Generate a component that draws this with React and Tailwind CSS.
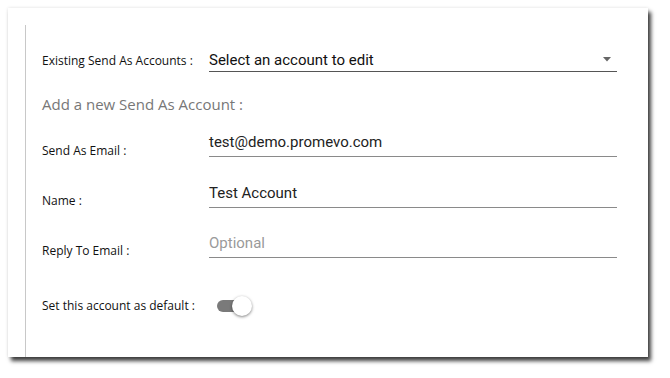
import React from 'react';

const labelFont = { fontFamily: '"Open Sans", "Liberation Sans", sans-serif' };

const Field = ({ label, value, placeholder, top, labelTop }) => (
  <div className={`flex ${top}`}>
    <div className={`w-[167px] shrink-0 text-[12px] leading-4 text-[#111] font-['Open_Sans',sans-serif] ${labelTop}`}>
      {label}
    </div>
    <div className="w-[408px] h-[26px] pt-[1px] border-b border-[#8a8a8a] font-['Roboto',sans-serif] text-[15px] leading-5">
      {value ? <span className="text-[#222]">{value}</span> : <span className="text-[#9a9a9a]">{placeholder}</span>}
    </div>
  </div>
);

const App = () => {
  return (
    <div className="w-[670px] h-[378px] bg-white p-[8px] pr-[22px] pb-[21px]">
      <div className="h-full bg-white shadow-[3px_4px_4px_rgba(0,0,0,0.75),0_0_3px_rgba(0,0,0,0.12)] pt-[17px] pl-[17px]">
        <div className="h-full border-l border-[#c8c8c8] pl-[16px] pt-[23px]" style={labelFont}>
          <div className="flex items-center">
            <div className="w-[167px] shrink-0 text-[12px] leading-4 text-[#111] font-['Open_Sans',sans-serif] mt-[1px]">
              Existing Send As Accounts :
            </div>
            <div className="w-[408px] h-[24px] border-b border-[#555] flex items-center justify-between font-['Roboto',sans-serif] text-[15px] leading-5 text-[#111]">
              <span>Select an account to edit</span>
              <svg width="8" height="5" viewBox="0 0 8 5" className="mr-[6px]">
                <path d="M0 0 L8 0 L4 4.5 Z" fill="#666" />
              </svg>
            </div>
          </div>
          <div className="mt-[22px] text-[15px] leading-5 text-[#777] font-['Open_Sans',sans-serif]">
            Add a new Send As Account :
          </div>
          <Field label="Send As Email :" value="test@demo.promevo.com" top="mt-[17px]" labelTop="mt-[12px]" />
          <Field label="Name :" value="Test Account" top="mt-[23px]" labelTop="mt-[11px]" />
          <Field label="Reply To Email :" placeholder="Optional" top="mt-[23px]" labelTop="mt-[11px]" />
          <div className="flex items-center mt-[37px]">
            <div className="w-[167px] shrink-0 text-[12px] leading-4 text-[#111] font-['Open_Sans',sans-serif]">
              Set this account as default :
            </div>
            <div className="relative ml-[8px] w-[34px] h-[20px] flex items-center">
              <div className="w-[30px] h-[12px] rounded-full bg-[#7a7a7a]" />
              <div className="absolute left-[15px] top-0 w-[20px] h-[20px] rounded-full bg-white shadow-[0_1px_3px_rgba(0,0,0,0.5)]" />
            </div>
          </div>
        </div>
      </div>
    </div>
  );
};

export default App;
